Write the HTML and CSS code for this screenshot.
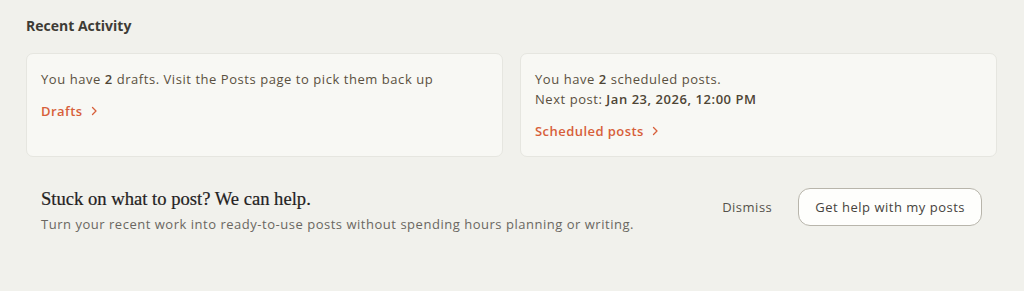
FILE: index.html
```html
<!DOCTYPE html>
<html>
<head>
<meta charset="utf-8">
<link rel="stylesheet" href="styles.css">
</head>
<body>
<main class="page">
  <h2 class="section-title">Recent Activity</h2>
  <div class="cards">
    <div class="card">
      <p class="card-text">You have <b>2</b> drafts. Visit the Posts page to pick them back up</p>
      <a class="card-link" href="#">Drafts <svg class="chev" viewBox="0 0 10 10" width="10" height="10"><path d="M3.5 1.5 L7 5 L3.5 8.5" fill="none" stroke="currentColor" stroke-width="1.3" stroke-linecap="round" stroke-linejoin="round"/></svg></a>
    </div>
    <div class="card">
      <p class="card-text">You have <b>2</b> scheduled posts.<br>Next post: <b>Jan 23, 2026, 12:00 PM</b></p>
      <a class="card-link" href="#">Scheduled posts <svg class="chev" viewBox="0 0 10 10" width="10" height="10"><path d="M3.5 1.5 L7 5 L3.5 8.5" fill="none" stroke="currentColor" stroke-width="1.3" stroke-linecap="round" stroke-linejoin="round"/></svg></a>
    </div>
  </div>
  <section class="help">
    <div class="help-copy">
      <h3 class="help-title">Stuck on what to post? We can help.</h3>
      <p class="help-sub">Turn your recent work into ready-to-use posts without spending hours planning or writing.</p>
    </div>
    <div class="help-actions">
      <button class="btn-text">Dismiss</button>
      <button class="btn-outline">Get help with my posts</button>
    </div>
  </section>
</main>
</body>
</html>
```
FILE: styles.css
```css
* { box-sizing: border-box; }
html, body { margin: 0; padding: 0; }
body {
  background: #f1f1ec;
  font-family: "Open Sans", "Liberation Sans", sans-serif;
  color: #5a5040;
  width: 1024px;
  height: 291px;
  overflow: hidden;
}
.page { padding: 16px 27px 0 26px; }
.section-title {
  margin: 0;
  font-size: 14px;
  font-weight: 700;
  color: #3e3b35;
  line-height: 20px;
}
.cards {
  display: grid;
  grid-template-columns: 1fr 1fr;
  gap: 17px;
  margin-top: 17px;
}
.card {
  background: #f8f8f4;
  border: 1px solid #e6e6e0;
  border-radius: 7px;
  height: 104px;
  padding: 15px 14px;
}
.card-text {
  margin: 0;
  font-size: 13px;
  line-height: 20px;
  letter-spacing: 0.55px;
  color: #5a5040;
}
.card-text b { font-weight: 600; color: #4e4535; }
.card-link {
  display: inline-flex;
  align-items: center;
  gap: 6px;
  margin-top: 12px;
  font-size: 13px;
  font-weight: 600;
  letter-spacing: 0.45px;
  color: #d75f3a;
  text-decoration: none;
  line-height: 20px;
}
.chev { display: block; }
.help {
  display: flex;
  align-items: center;
  justify-content: space-between;
  padding: 30px 15px 0 15px;
}
.help-title {
  margin: 0;
  font-family: "Liberation Serif", "DejaVu Serif", serif;
  font-size: 18.6px;
  font-weight: 400;
  color: #24221e;
  line-height: 24px;
  -webkit-text-stroke: 0.2px #24221e;
}
.help-sub {
  margin: 4px 0 0;
  font-size: 13px;
  letter-spacing: 0.52px;
  color: #6a6761;
  line-height: 18px;
}
.help-actions {
  display: flex;
  align-items: center;
  gap: 26px;
  margin-top: -6px;
}
.btn-text {
  background: none;
  border: none;
  padding: 0;
  font-family: inherit;
  font-size: 13px;
  letter-spacing: 0.5px;
  color: #55524b;
}
.btn-outline {
  background: #fefefc;
  border: 1px solid #b8b5ab;
  border-radius: 12px;
  height: 38px;
  min-height: 38px;
  padding: 0 16px;
  font-family: inherit;
  font-size: 13px;
  letter-spacing: 0.5px;
  color: #46433d;
}
```
